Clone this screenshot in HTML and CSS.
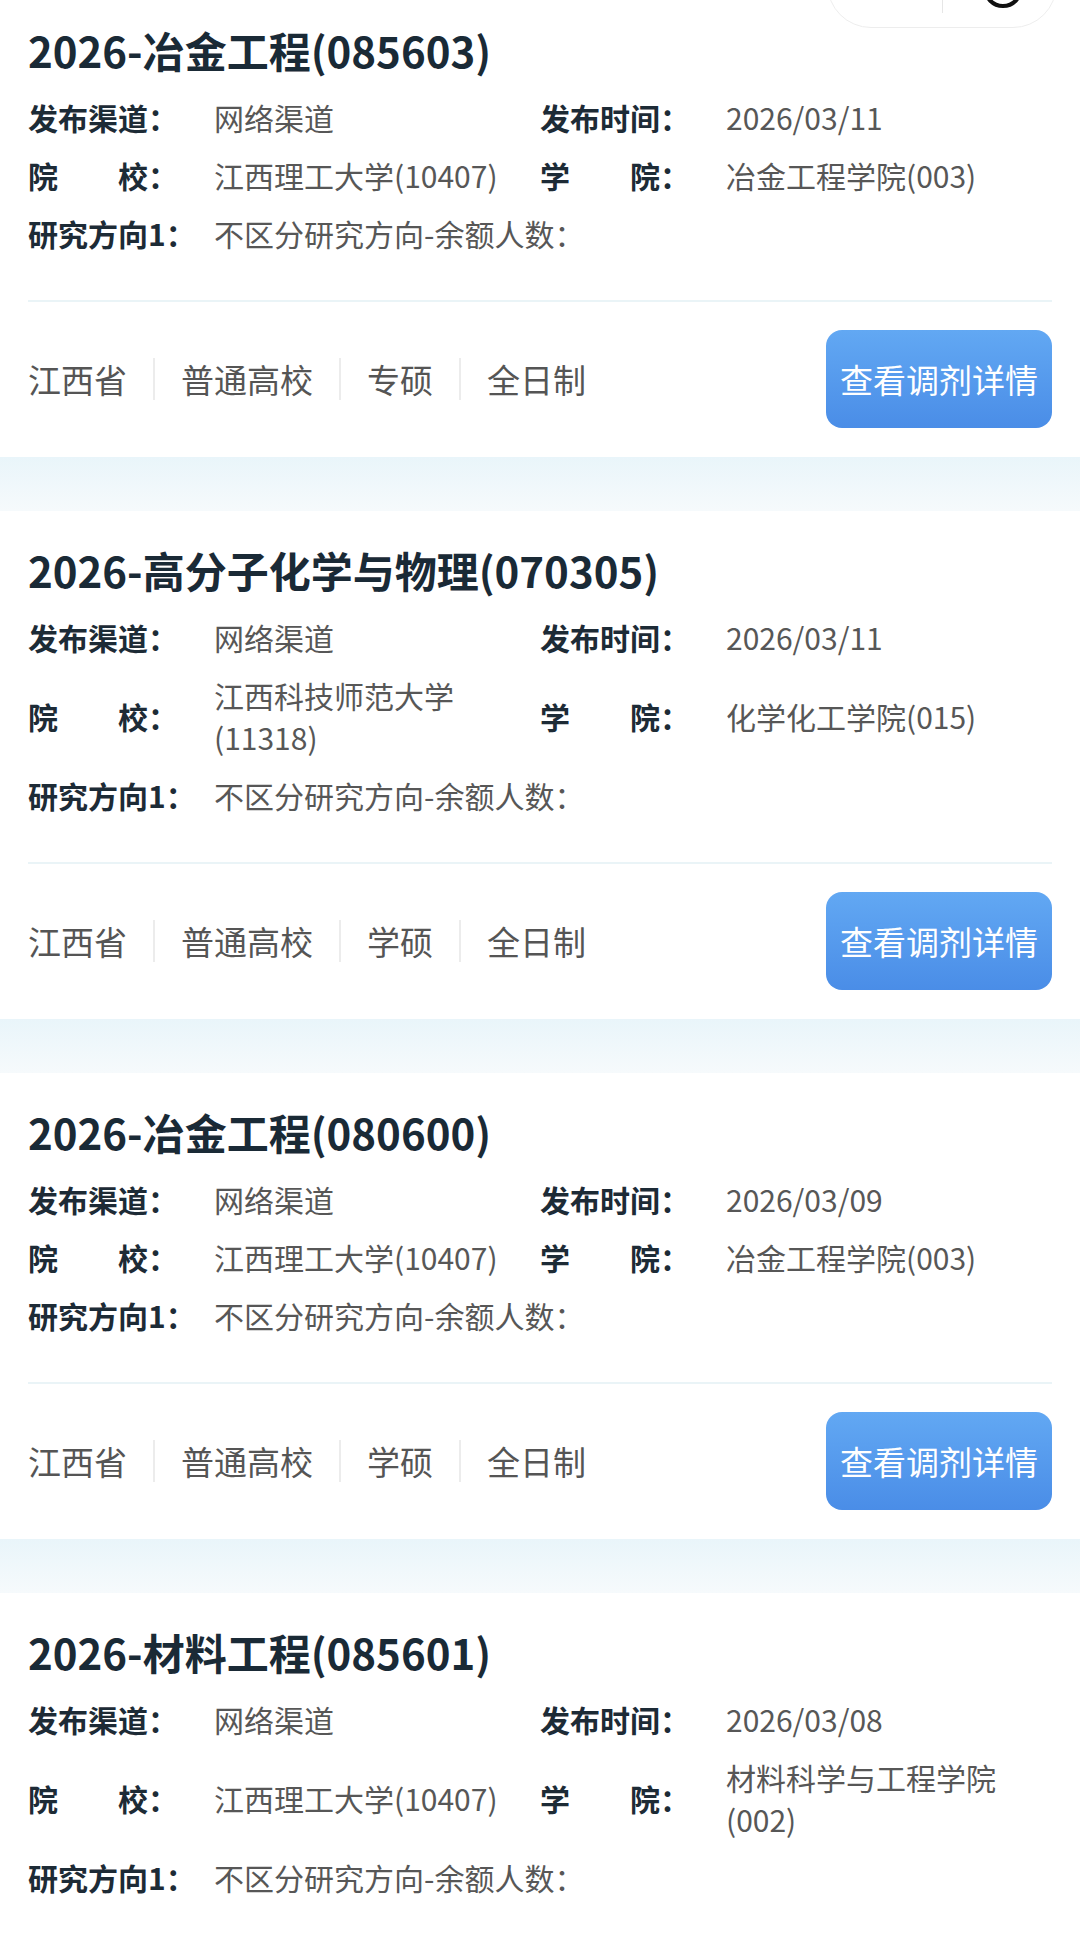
FILE: index.html
```html
<!DOCTYPE html>
<html lang="zh-CN">
<head>
    <meta charset="UTF-8">
    <meta name="viewport" content="width=device-width, initial-scale=1.0">
    <title>调剂信息</title>
    <link rel="stylesheet" href="styles.css">
</head>
<body>

    <!-- mini program capsule, scrolled mostly out of view -->
    <div class="capsule">
        <span class="capsule-line"></span>
        <span class="capsule-ring"></span>
    </div>

    <div class="list">

        <div class="card">
            <div class="card-title">2026-冶金工程(085603)</div>
            <div class="info">
                <div class="label">发布渠道：</div>
                <div class="value">网络渠道</div>
                <div class="label">发布时间：</div>
                <div class="value">2026/03/11</div>
                <div class="label">院　　校：</div>
                <div class="value">江西理工大学(10407)</div>
                <div class="label">学　　院：</div>
                <div class="value">冶金工程学院(003)</div>
                <div class="label">研究方向1：</div>
                <div class="value wide">不区分研究方向-余额人数：</div>
            </div>
            <div class="card-foot">
                <div class="tags">
                    <span class="tag">江西省</span>
                    <span class="tag">普通高校</span>
                    <span class="tag">专硕</span>
                    <span class="tag">全日制</span>
                </div>
                <button type="button" class="detail-btn">查看调剂详情</button>
            </div>
        </div>

        <div class="card">
            <div class="card-title">2026-高分子化学与物理(070305)</div>
            <div class="info">
                <div class="label">发布渠道：</div>
                <div class="value">网络渠道</div>
                <div class="label">发布时间：</div>
                <div class="value">2026/03/11</div>
                <div class="label">院　　校：</div>
                <div class="value">江西科技师范大学(11318)</div>
                <div class="label">学　　院：</div>
                <div class="value">化学化工学院(015)</div>
                <div class="label">研究方向1：</div>
                <div class="value wide">不区分研究方向-余额人数：</div>
            </div>
            <div class="card-foot">
                <div class="tags">
                    <span class="tag">江西省</span>
                    <span class="tag">普通高校</span>
                    <span class="tag">学硕</span>
                    <span class="tag">全日制</span>
                </div>
                <button type="button" class="detail-btn">查看调剂详情</button>
            </div>
        </div>

        <div class="card">
            <div class="card-title">2026-冶金工程(080600)</div>
            <div class="info">
                <div class="label">发布渠道：</div>
                <div class="value">网络渠道</div>
                <div class="label">发布时间：</div>
                <div class="value">2026/03/09</div>
                <div class="label">院　　校：</div>
                <div class="value">江西理工大学(10407)</div>
                <div class="label">学　　院：</div>
                <div class="value">冶金工程学院(003)</div>
                <div class="label">研究方向1：</div>
                <div class="value wide">不区分研究方向-余额人数：</div>
            </div>
            <div class="card-foot">
                <div class="tags">
                    <span class="tag">江西省</span>
                    <span class="tag">普通高校</span>
                    <span class="tag">学硕</span>
                    <span class="tag">全日制</span>
                </div>
                <button type="button" class="detail-btn">查看调剂详情</button>
            </div>
        </div>

        <div class="card">
            <div class="card-title">2026-材料工程(085601)</div>
            <div class="info">
                <div class="label">发布渠道：</div>
                <div class="value">网络渠道</div>
                <div class="label">发布时间：</div>
                <div class="value">2026/03/08</div>
                <div class="label">院　　校：</div>
                <div class="value">江西理工大学(10407)</div>
                <div class="label">学　　院：</div>
                <div class="value">材料科学与工程学院(002)</div>
                <div class="label">研究方向1：</div>
                <div class="value wide">不区分研究方向-余额人数：</div>
            </div>
            <div class="card-foot">
                <div class="tags">
                    <span class="tag">江西省</span>
                    <span class="tag">普通高校</span>
                    <span class="tag">专硕</span>
                    <span class="tag">全日制</span>
                </div>
                <button type="button" class="detail-btn">查看调剂详情</button>
            </div>
        </div>

    </div>

</body>
</html>
```

FILE: styles.css
```css
body {
    margin: 0;
    padding: 0;
    background-color: #ffffff;
    font-family: "Noto Sans CJK SC", "Noto Sans", sans-serif;
    color: #555;
}
.list {
    margin-top: -9px;
}
.card {
    background-color: #ffffff;
    padding: 31px 28px 0;
}
.card::after {
    content: "";
    display: block;
    height: 54px;
    margin: 0 -28px;
    background-image: linear-gradient(to bottom, #e9f5fa, #f6fafc);
}
.card-title {
    font-size: 42px;
    line-height: 56px;
    font-weight: bold;
    color: #1a2a36;
}
.info {
    display: grid;
    grid-template-columns: 186px 1fr 186px 1fr;
    row-gap: 16px;
    align-items: center;
    margin-top: 18px;
    padding-bottom: 46px;
    border-bottom: 2px solid #eaf4f7;
    font-size: 30px;
    line-height: 42px;
}
.label {
    font-weight: bold;
    color: #1d2b36;
    white-space: nowrap;
}
.value {
    color: #575757;
}
.value.wide {
    grid-column: 2 / -1;
}
.card-foot {
    display: flex;
    justify-content: space-between;
    align-items: center;
    padding: 28px 0 29px;
}
.tags {
    display: flex;
    align-items: center;
}
.tag {
    font-size: 33px;
    line-height: 42px;
    color: #555;
    padding: 0 26px;
    border-left: 2px solid #ececec;
}
.tag:first-child {
    padding-left: 0;
    border-left: none;
}
.detail-btn {
    height: 98px;
    padding: 0 14px;
    border: none;
    border-radius: 16px;
    background-image: linear-gradient(to bottom, #62a8f3, #4a8de7);
    color: #ffffff;
    font-family: inherit;
    font-size: 33px;
    cursor: pointer;
}
.capsule {
    position: fixed;
    top: -60px;
    left: 827px;
    width: 230px;
    height: 88px;
    box-sizing: border-box;
    border: 1px solid #ededed;
    border-radius: 44px;
    background-color: #ffffff;
}
.capsule-line {
    position: absolute;
    left: 114px;
    top: 0;
    width: 1px;
    height: 72px;
    background-color: #e6e6e6;
}
.capsule-ring {
    position: absolute;
    left: 155px;
    top: 27px;
    width: 32px;
    height: 32px;
    border: 4px solid #111;
    border-radius: 50%;
}
```
